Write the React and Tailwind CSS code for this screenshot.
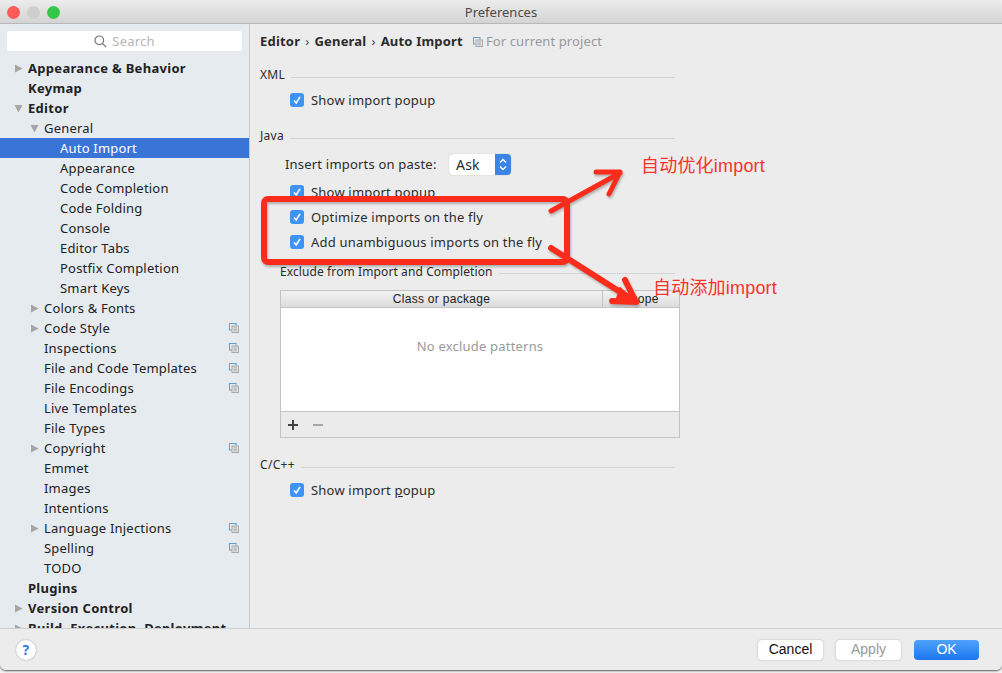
const ui = "font-['Noto_Sans',sans-serif] tracking-[0.2px]";

const tree = [
  { label: 'Appearance & Behavior', level: 0, bold: true, arrow: 'right' },
  { label: 'Keymap', level: 0, bold: true },
  { label: 'Editor', level: 0, bold: true, arrow: 'down' },
  { label: 'General', level: 1, arrow: 'down' },
  { label: 'Auto Import', level: 2, selected: true },
  { label: 'Appearance', level: 2 },
  { label: 'Code Completion', level: 2 },
  { label: 'Code Folding', level: 2 },
  { label: 'Console', level: 2 },
  { label: 'Editor Tabs', level: 2 },
  { label: 'Postfix Completion', level: 2 },
  { label: 'Smart Keys', level: 2 },
  { label: 'Colors & Fonts', level: 1, arrow: 'right' },
  { label: 'Code Style', level: 1, arrow: 'right', copy: true },
  { label: 'Inspections', level: 1, copy: true },
  { label: 'File and Code Templates', level: 1, copy: true },
  { label: 'File Encodings', level: 1, copy: true },
  { label: 'Live Templates', level: 1 },
  { label: 'File Types', level: 1 },
  { label: 'Copyright', level: 1, arrow: 'right', copy: true },
  { label: 'Emmet', level: 1 },
  { label: 'Images', level: 1 },
  { label: 'Intentions', level: 1 },
  { label: 'Language Injections', level: 1, arrow: 'right', copy: true },
  { label: 'Spelling', level: 1, copy: true },
  { label: 'TODO', level: 1 },
  { label: 'Plugins', level: 0, bold: true },
  { label: 'Version Control', level: 0, bold: true, arrow: 'right' },
  { label: 'Build, Execution, Deployment', level: 0, bold: true, arrow: 'right' },
];

function CopyIcon({ className }) {
  return (
    <svg width="10" height="10" viewBox="0 0 10 10" className={className}>
      <rect x="0.5" y="0.5" width="6.5" height="6.5" fill="none" stroke="#5aa3d8" />
      <rect x="3" y="3" width="6.5" height="6.5" fill="#e4e4e4" stroke="#a9a9a9" />
      <path d="M4.5 4.8h3.5M4.5 6.3h3.5M4.5 7.8h3.5" stroke="#a0a0a0" strokeWidth="0.7" />
    </svg>
  );
}

function Triangle({ dir }) {
  return (
    <svg width="9" height="9" viewBox="0 0 9 9">
      {dir === 'right' ? <path d="M1 0.5L8.5 4.5L1 8.5Z" fill="#a6a6a6" /> : <path d="M0.5 1H8.5L4.5 8.5Z" fill="#a6a6a6" />}
    </svg>
  );
}

function TreeRow({ item }) {
  const rowClass = item.selected ? 'bg-[#3875d7] text-white' : 'text-[#222]';
  const indent = item.level === 0 ? 'pl-[28px]' : item.level === 1 ? 'pl-[44px]' : 'pl-[60px]';
  const arrowPos = item.level === 0 ? 'left-[14px]' : 'left-[30px]';
  return (
    <div className={`relative h-5 shrink-0 flex items-center text-[13px] leading-5 whitespace-nowrap ${indent} ${rowClass} ${item.bold ? 'font-bold tracking-[0.3px]' : ''}`}>
      {item.arrow && (
        <span className={`absolute top-[6px] flex ${arrowPos}`}>
          <Triangle dir={item.arrow} />
        </span>
      )}
      {item.label}
      {item.copy && <CopyIcon className="absolute left-[229px] top-[5px]" />}
    </div>
  );
}

function Checkbox() {
  return (
    <span className="w-[14px] h-[14px] rounded-[3px] bg-[#3d94f6] flex items-center justify-center shrink-0">
      <svg width="10" height="10" viewBox="0 0 10 10">
        <path d="M2 5.4L4.2 8L8 1.8" fill="none" stroke="white" strokeWidth="1.6" />
      </svg>
    </span>
  );
}

function CheckRow({ className, children }) {
  return (
    <div className={`h-5 flex items-center gap-[7px] pl-[30px] text-[13px] text-[#2b2b2b] ${className}`}>
      <Checkbox />
      <span className="whitespace-nowrap pt-[2px]">{children}</span>
    </div>
  );
}

function SectionTitle({ className, label }) {
  return (
    <div className={`h-5 flex items-center gap-[6px] w-[415px] text-[12px] tracking-[0.3px] text-[#2b2b2b] ${className}`}>
      <span className="whitespace-nowrap pt-[2px]">{label}</span>
      <span className="flex-1 h-px mt-[6px] bg-[#d4d4d4]" />
    </div>
  );
}

function Button({ className, children }) {
  return (
    <div className={`h-5 w-[65px] rounded-[4px] flex items-center justify-center text-[14px] font-['Liberation_Sans',sans-serif] tracking-normal ${className}`}>
      {children}
    </div>
  );
}

export default function App() {
  return (
    <div className={`relative w-[1002px] h-[673px] overflow-hidden bg-[#f4f4f4] ${ui}`}>
      <div className="h-[670px] flex flex-col rounded-b-[6px] overflow-hidden bg-[#ececec] shadow-[0_1px_2px_#555]">
        {/* title bar */}
        <div className="relative h-6 shrink-0 flex items-center justify-center rounded-t-[5px] bg-gradient-to-b from-[#ececec] to-[#d4d4d4] border-b border-[#b9b9b9] text-[13px] tracking-normal text-[#4a4a4a] pt-[2px]">
          <div className="absolute left-[7px] top-[6px] flex gap-[7px]">
            <span className="w-[13px] h-[13px] rounded-full bg-[#fc5b57]" />
            <span className="w-[13px] h-[13px] rounded-full bg-[#cfcfcf]" />
            <span className="w-[13px] h-[13px] rounded-full bg-[#34c84a]" />
          </div>
          Preferences
        </div>

        <div className="flex flex-1 min-h-0">
          {/* sidebar */}
          <div className="w-[250px] shrink-0 flex flex-col overflow-hidden bg-[#e6ebf0] border-r border-[#c8c8c8]">
            <div className="mx-[7px] my-[7px] h-5 shrink-0 rounded-[3px] bg-white flex items-center justify-center gap-[5px] text-[13px] text-[#b5b5b5]">
              <svg width="13" height="13" viewBox="0 0 13 13" fill="none" stroke="#777" strokeWidth="1.2">
                <circle cx="5.3" cy="5.3" r="4.3" />
                <path d="M8.5 8.5L12.2 12.2" />
              </svg>
              <span className="pt-[2px]">Search</span>
            </div>
            {tree.map((item) => (
              <TreeRow key={item.label} item={item} />
            ))}
          </div>

          {/* settings panel */}
          <div className="flex-1 pl-[10px] pt-[7px]">
            <div className="h-5 pt-[2px] flex items-center text-[13px] whitespace-nowrap">
              <span className="font-bold text-[#2b2b2b]">Editor</span>
              <span className="mx-[5px] text-[#444]">›</span>
              <span className="font-bold text-[#2b2b2b]">General</span>
              <span className="mx-[5px] text-[#444]">›</span>
              <span className="font-bold text-[#2b2b2b]">Auto Import</span>
              <CopyIcon className="ml-[10px] mr-[3px]" />
              <span className="text-[#999] tracking-[0.1px]">For current project</span>
            </div>

            <SectionTitle className="mt-[13px]" label="XML" />
            <CheckRow className="mt-[6px]">Show import popup</CheckRow>

            <SectionTitle className="mt-[15px]" label="Java" />
            <div className="mt-[7px] h-6 pl-[25px] flex items-center text-[13px] text-[#2b2b2b]">
              <span className="w-[164px] whitespace-nowrap pt-[2px]">Insert imports on paste:</span>
              <div className="h-[21px] w-[62px] rounded-[4px] bg-white shadow-[0_0_1px_#999] flex items-center overflow-hidden">
                <span className="flex-1 pl-[7px] text-[14px]">Ask</span>
                <span className="w-4 h-full bg-[#3b86e4] flex items-center justify-center">
                  <svg width="10" height="15" viewBox="0 0 10 15" fill="none" stroke="white" strokeWidth="1.3">
                    <path d="M2 5.5L5 2.5L8 5.5M2 9.5L5 12.5L8 9.5" />
                  </svg>
                </span>
              </div>
            </div>
            <CheckRow className="mt-[6px]">Show import popup</CheckRow>
            <CheckRow className="mt-[5px]">Optimize imports on the fly</CheckRow>
            <CheckRow className="mt-[5px]">Add unambiguous imports on the fly</CheckRow>

            <div className="mt-[10px] ml-[20px] w-[395px] h-5 flex items-center gap-[6px] text-[12px] tracking-[0.1px] text-[#2b2b2b]">
              <span className="whitespace-nowrap">Exclude from Import and Completion</span>
              <span className="flex-1 h-px mt-[2px] bg-[#d4d4d4]" />
            </div>

            <div className="mt-[8px] ml-[20px] w-[400px] h-[148px] flex flex-col border border-[#c4c4c4]">
              <div className="h-[17px] shrink-0 flex bg-gradient-to-b from-[#f2f2f2] to-[#dcdcdc] border-b border-[#c4c4c4] text-[12px] font-['Liberation_Sans',sans-serif] text-[#222] tracking-[0.3px]">
                <div className="w-[322px] flex items-center justify-center border-r border-[#c4c4c4]">Class or package</div>
                <div className="flex-1 flex items-center justify-center">Scope</div>
              </div>
              <div className="flex-1 pb-[26px] bg-white flex items-center justify-center text-[13px] text-[#9a9a9a]">No exclude patterns</div>
              <div className="h-[26px] shrink-0 flex items-center gap-[13px] pl-[6px] border-t border-[#c4c4c4] bg-[#ebebeb]">
                <svg width="12" height="12" viewBox="0 0 12 12" stroke="#444" strokeWidth="2"><path d="M1 6H11M6 1V11" /></svg>
                <svg width="12" height="12" viewBox="0 0 12 12" stroke="#a5a5a5" strokeWidth="2"><path d="M1 6H11" /></svg>
              </div>
            </div>

            <SectionTitle className="mt-[16px]" label="C/C++" />
            <CheckRow className="mt-[6px]">
              Show import <span className="underline">p</span>opup
            </CheckRow>
          </div>
        </div>

        {/* footer */}
        <div className="h-[42px] shrink-0 flex items-center gap-[13px] pr-[23px] border-t border-[#cfcfcf] bg-[#ececec]">
          <div className="ml-[16px] mr-auto w-5 h-5 rounded-full bg-white shadow-[0_0_2px_#999] flex items-center justify-center text-[14px] font-bold text-[#2c7be5]">?</div>
          <Button className="bg-white shadow-[0_0_2px_#aaa] text-[#111]">Cancel</Button>
          <Button className="bg-white shadow-[0_0_2px_#aaa] text-[#999]">Apply</Button>
          <Button className="bg-gradient-to-b from-[#4ea2fb] to-[#1a76f0] text-white">OK</Button>
        </div>
      </div>

      {/* hand drawn annotation */}
      <svg className="absolute inset-0 pointer-events-none drop-shadow-[1px_2px_1px_rgba(0,0,0,0.25)]" width="1002" height="673" fill="none" stroke="#fb2c1c" strokeWidth="6" strokeLinecap="round" strokeLinejoin="round">
        <rect x="264" y="199" width="303" height="63" rx="4" />
        <path d="M551 211L620 173M596 172L620 172L609 194" strokeWidth="5" />
        <path d="M551 248L636 302M625 280L636 302L612 301" />
        <path d="M620 288L637 303L616 302Z" fill="#fb2c1c" strokeWidth="2" />
      </svg>
      <div className="absolute left-[641px] top-[154px] text-[18px] leading-6 tracking-[0.2px] text-[#f5342a] font-['Liberation_Sans','Noto_Sans_CJK_SC',sans-serif]">自动优化import</div>
      <div className="absolute left-[653px] top-[276px] text-[18px] leading-6 tracking-[0.2px] text-[#f5342a] font-['Liberation_Sans','Noto_Sans_CJK_SC',sans-serif]">自动添加import</div>
    </div>
  );
}
